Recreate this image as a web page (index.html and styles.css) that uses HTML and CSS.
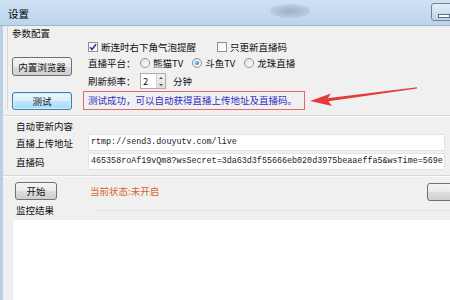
FILE: index.html
```html
<!DOCTYPE html>
<html lang="zh-CN">
<head>
  <meta charset="UTF-8" />
  <title>设置</title>
  <link rel="stylesheet" href="styles.css">
</head>
<body>
<div class="window">
  <div class="titlebar">
    <span class="title">设置</span>
    <span class="blur"></span>
    <div class="tb-btn"><i></i></div>
  </div>

  <div class="client">
    <div class="params">
      <div class="legend">参数配置</div>
      <div class="params-body">
        <div class="left-col">
          <div class="btn browser">内置浏览器</div>
          <div class="btn test">测试</div>
        </div>
        <div class="right-col">
          <div class="row r1">
            <span class="check">
              <span class="box">
                <svg width="8" height="8" viewBox="0 0 8 8"><path d="M1 4.2 L3 6.4 L7 1.2" fill="none" stroke="#1f3f9a" stroke-width="1.6"/></svg>
              </span>断连时右下角气泡提醒
            </span>
            <span class="check second"><span class="box"></span>只更新直播码</span>
          </div>
          <div class="row r2">
            <span class="lbl">直播平台：</span>
            <span class="radio"><span class="dot"></span>熊猫TV</span>
            <span class="radio"><span class="dot on"></span>斗鱼TV</span>
            <span class="radio"><span class="dot"></span>龙珠直播</span>
          </div>
          <div class="row r3">
            <span class="lbl">刷新频率：</span>
            <div class="spin">
              <span class="val">2</span>
              <div class="spin-btns"><i class="up"></i><i class="down"></i></div>
            </div>
            <span class="unit">分钟</span>
          </div>
          <div class="row r4">
            <div class="result">测试成功，可以自动获得直播上传地址及直播码。</div>
          </div>
        </div>
      </div>
    </div>

    <div class="sep first"></div>

    <div class="auto">
      <div class="caption">自动更新内容</div>
      <div class="field">
        <span class="field-lbl">直播上传地址</span>
        <div class="input">rtmp://send3.douyutv.com/live</div>
      </div>
      <div class="field">
        <span class="field-lbl">直播码</span>
        <div class="input">465358roAf19vQm8?wsSecret=3da63d3f55666eb020d3975beaaeffa5&amp;wsTime=569e</div>
      </div>
    </div>

    <div class="sep second"></div>

    <div class="start-row">
      <div class="btn start">开始</div>
      <span class="status">当前状态:未开启</span>
      <div class="btn side"></div>
    </div>

    <div class="monitor">
      <span>监控结果</span>
      <span class="line"></span>
    </div>

    <div class="results"></div>
  </div>

  <svg class="arrow" width="450" height="300" viewBox="0 0 450 300">
    <polygon points="417,87.2 417,88.6 327,101.6 325,98.4" fill="#e63b3b"/>
    <polygon points="310,101 331,93.5 327,99.6 332,106" fill="#e63b3b"/>
  </svg>
</div>
</body>
</html>
```

FILE: styles.css
```css
body {
  margin: 0;
  background: #f0f0f0;
  font-family: "Noto Sans CJK SC", "Liberation Sans", sans-serif;
  font-size: 9.5px;
  color: #111;
}

.window {
  position: relative;
  width: 450px;
  height: 300px;
  overflow: hidden;
  background: #f0f0f0;
}

/* title bar */
.titlebar {
  position: relative;
  height: 25px;
  display: flex;
  align-items: center;
  justify-content: space-between;
  background: linear-gradient(to bottom, #cfe1f3, #bcd4ec);
  border-bottom: 1px solid #9fb6ce;
}

.title {
  margin-left: 8px;
  margin-top: 2px;
  font-size: 10.5px;
  color: #000;
}

.blur {
  position: absolute;
  left: 270px;
  top: 4px;
  width: 40px;
  height: 14px;
  border-radius: 50%;
  background: radial-gradient(ellipse, rgba(120,140,165,0.55), rgba(120,140,165,0));
}

.tb-btn {
  position: relative;
  align-self: flex-start;
  margin-top: 3px;
  margin-right: -8px;
  width: 25px;
  height: 16px;
  border: 1px solid #6f8299;
  border-radius: 3px;
  background: linear-gradient(to bottom, #e4eef8, #bfd2e7);
}

.tb-btn i {
  position: absolute;
  left: 6px;
  top: 10px;
  width: 10px;
  height: 2px;
  background: #fff;
  border: 1px solid #5a6b80;
}

/* client area */
.client {
  border-left: 3px solid #b9cfe6;
  height: 274px;
  display: flex;
  flex-direction: column;
}

.params {
  margin-left: 4px;
  border-left: 1px solid #d3d9df;
}

.legend {
  margin-top: 1px;
  padding-left: 4px;
  height: 12px;
  line-height: 12px;
}

.params-body {
  display: flex;
  padding-left: 4px;
  gap: 16px;
}

.left-col {
  display: flex;
  flex-direction: column;
  width: 60px;
}

.btn {
  box-sizing: border-box;
  display: flex;
  align-items: center;
  justify-content: center;
  border: 1px solid #707070;
  border-radius: 3px;
  background: linear-gradient(to bottom, #f4f4f4 0%, #ebebeb 50%, #dddddd 51%, #cfcfcf 100%);
  color: #111;
}

.browser {
  margin-top: 18px;
  height: 19px;
}

.test {
  margin-top: 16px;
  height: 18px;
  border-color: #3c7fb1;
  background: linear-gradient(to bottom, #eaf6fd 0%, #d9f0fc 50%, #bee6fd 51%, #a7d9f5 100%);
  box-shadow: inset 0 0 0 1px #d6ecf8;
}

.right-col {
  display: flex;
  flex-direction: column;
}

.row {
  display: flex;
  align-items: center;
}

.r1 { height: 15px; }
.r2 { height: 18px; }
.r3 { height: 18px; }
.r4 { height: 19px; margin-top: 1px; }

.check, .radio {
  display: flex;
  align-items: center;
  gap: 3px;
}

.check.second {
  margin-left: 21px;
}

.box {
  box-sizing: border-box;
  width: 10px;
  height: 10px;
  border: 1px solid #8e8f8f;
  background: linear-gradient(135deg, #f4f4f4, #ffffff);
  display: flex;
  align-items: center;
  justify-content: center;
}

.lbl {
  width: 52px;
}

.radio + .radio {
  margin-left: 9px;
}

.dot {
  box-sizing: border-box;
  width: 10px;
  height: 10px;
  border: 1px solid #8e8f8f;
  border-radius: 50%;
  background: linear-gradient(135deg, #e2e2e2, #ffffff);
  display: flex;
  align-items: center;
  justify-content: center;
}

.dot.on::after {
  content: "";
  width: 4px;
  height: 4px;
  border-radius: 50%;
  background: radial-gradient(circle at 35% 35%, #8fd0ff, #1c5fa8);
}

.spin {
  box-sizing: border-box;
  display: flex;
  justify-content: space-between;
  width: 26px;
  height: 16px;
  border: 1px solid #abadb3;
  background: #fff;
}

.val {
  padding-left: 2px;
  line-height: 14px;
}

.spin-btns {
  width: 8px;
  display: flex;
  flex-direction: column;
  background: linear-gradient(to bottom, #f3f3f3, #dedede);
  border-left: 1px solid #d0d0d0;
}

.spin-btns i {
  flex: 1;
  display: flex;
  align-items: center;
  justify-content: center;
}

.spin-btns .up::after {
  content: "";
  border-left: 2px solid transparent;
  border-right: 2px solid transparent;
  border-bottom: 2px solid #4d4d4d;
}

.spin-btns .down::after {
  content: "";
  border-left: 2px solid transparent;
  border-right: 2px solid transparent;
  border-top: 2px solid #4d4d4d;
}

.unit {
  margin-left: 7px;
}

.result {
  box-sizing: border-box;
  margin-left: -5px;
  width: 222px;
  height: 19px;
  padding-left: 4px;
  line-height: 17px;
  border: 1px solid #e26a6a;
  color: #3030c4;
}

.sep {
  height: 1px;
  background: #d7d7d7;
  border-bottom: 1px solid #fbfbfb;
}

.sep.first { margin-top: 5px; }
.sep.second { margin-top: 5px; }

.auto {
  padding-left: 13px;
}

.caption {
  margin-top: 3px;
  height: 12px;
  line-height: 12px;
}

.field {
  display: flex;
  align-items: center;
  margin-top: 2px;
}

.field + .field {
  margin-top: 2px;
}

.field-lbl {
  width: 72px;
}

.input {
  box-sizing: border-box;
  width: 357px;
  height: 17px;
  padding-left: 2px;
  border: 1px solid #e2e3ea;
  background: #fff;
  font-family: "Liberation Mono", monospace;
  font-size: 8.4px;
  line-height: 15px;
  white-space: nowrap;
  overflow: hidden;
  color: #1a1a1a;
}

.start-row {
  display: flex;
  align-items: center;
  margin-top: 3px;
  padding-left: 12px;
}

.start {
  width: 42px;
  height: 18px;
}

.status {
  margin-left: 33px;
  color: #d8672c;
}

.side {
  margin-left: auto;
  margin-right: -10px;
  width: 33px;
  height: 18px;
  margin-top: 3px;
}

.monitor {
  display: flex;
  align-items: center;
  margin-top: 3px;
  padding-left: 13px;
  height: 12px;
  line-height: 12px;
}

.monitor .line {
  flex: 1;
  margin-left: 40px;
  height: 1px;
  background: #e2e2e2;
}

.results {
  flex: 1;
  margin-top: 4px;
  margin-left: 8px;
  background: #fff;
  border-left: 2px solid #e9eef4;
}

.arrow {
  position: absolute;
  left: 0;
  top: 0;
  pointer-events: none;
}
```
